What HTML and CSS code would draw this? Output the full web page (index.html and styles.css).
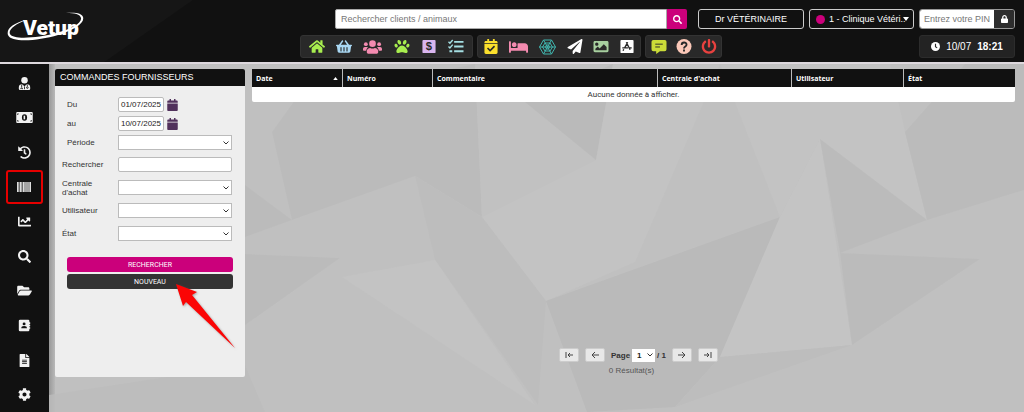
FILE: index.html
```html
<!DOCTYPE html>
<html lang="fr">
<head>
<meta charset="utf-8">
<meta name="viewport" content="width=device-width, initial-scale=1">
<title>Vetup - Commandes fournisseurs</title>
<link rel="stylesheet" href="styles.css">
</head>
<body>
<div class="app">
  <header class="topbar">
    <a class="logo" href="#" aria-label="Vetup">
      <svg viewBox="0 0 80 36" aria-hidden="true">
        <path d="M19 11C6 14-1 20 1 26c3 8 30 6 50 0 16-5 27-12 25-18-1-4-8-5-17-4 9 0 14 1 15 5 1 5-10 11-25 15-18 5-43 7-46 1C1 21 8 15 19 11z"/>
        <text class="logo-text" x="16" y="26">Vetup</text>
      </svg>
    </a>
    <div class="topbar-content">
      <div class="topbar-row">
        <form class="search">
          <input type="search" class="search-input" placeholder="Rechercher clients / animaux" aria-label="Rechercher clients / animaux">
          <button type="button" class="search-button" aria-label="Rechercher"><svg viewBox="0 0 512 512"><path d="M505 442.700L405.300 343c-4.500-4.500-10.600-7-17-7H372c27.600-35.300 44-79.700 44-128C416 93.100 322.900 0 208 0S0 93.100 0 208s93.100 208 208 208c48.300 0 92.700-16.400 128-44v16.300c0 6.400 2.500 12.500 7 17l99.700 99.700c9.400 9.400 24.600 9.400 33.900 0l28.300-28.300c9.400-9.400 9.400-24.600.1-34zM208 336c-70.700 0-128-57.200-128-128 0-70.700 57.200-128 128-128 70.700 0 128 57.200 128 128 0 70.700-57.200 128-128 128z"/></svg></button>
        </form>
        <div class="account">
          <button type="button" class="user-button">Dr VÉTÉRINAIRE</button>
          <label class="clinic">
            <span class="clinic-dot"></span>
            <select class="clinic-select" aria-label="Clinique"><option>1 - Clinique Vétéri..</option></select>
          </label>
          <form class="pin">
            <input type="text" class="pin-input" placeholder="Entrez votre PIN" aria-label="Entrez votre PIN">
            <button type="button" class="pin-button" aria-label="Verrouiller"><svg viewBox="0 0 448 512"><path d="M400 224h-24v-72C376 68.200 307.800 0 224 0S72 68.200 72 152v72H48c-26.500 0-48 21.500-48 48v192c0 26.500 21.500 48 48 48h352c26.500 0 48-21.500 48-48V272c0-26.500-21.500-48-48-48zm-104 0H152v-72c0-39.700 32.300-72 72-72s72 32.300 72 72v72z"/></svg></button>
          </form>
        </div>
      </div>
      <div class="topbar-row">
        <nav class="tools tools-main" aria-label="Raccourcis">
          <a class="lime" href="#" aria-label="Accueil"><svg viewBox="0 0 576 512"><path d="M280.370 148.260L96 300.110V464a16 16 0 0 0 16 16l112.060-.29a16 16 0 0 0 15.920-16V368a16 16 0 0 1 16-16h64a16 16 0 0 1 16 16v95.640a16 16 0 0 0 16 16.050L464 480a16 16 0 0 0 16-16V300L295.670 148.260a12.190 12.190 0 0 0-15.300 0zM571.600 251.470L488 182.560V44.050a12 12 0 0 0-12-12h-56a12 12 0 0 0-12 12v72.610L318.470 43a48 48 0 0 0-61 0L4.340 251.470a12 12 0 0 0-1.600 16.900l25.500 31A12 12 0 0 0 45.150 301l235.220-193.740a12.190 12.190 0 0 1 15.300 0L530.900 301a12 12 0 0 0 16.900-1.600l25.500-31a12 12 0 0 0-1.700-16.930z"/></svg></a>
          <a class="sky" href="#" aria-label="Panier"><svg viewBox="0 0 576 512"><path fill-rule="evenodd" d="M24 192h80L210 46c20-28 66 4 46 34l-80 112h224L320 80c-20-30 26-62 46-34l106 146h80c32 0 32 56 0 56h-8l-28 192c-4 24-22 40-48 40H108c-26 0-44-16-48-40L32 248h-8c-32 0-32-56 0-56zm136 104v120c0 28 40 28 40 0V296c0-28-40-28-40 0zm108 0v120c0 28 40 28 40 0V296c0-28-40-28-40 0zm108 0v120c0 28 40 28 40 0V296c0-28-40-28-40 0z"/></svg></a>
          <a class="pink" href="#" aria-label="Clients"><svg class="wide" viewBox="0 0 640 512"><circle cx="96" cy="160" r="64"/><circle cx="544" cy="160" r="64"/><circle cx="320" cy="144" r="112"/><path d="M64 256h64c18 0 34 7 46 19-40 22-60 60-66 109H32c-18 0-32-14-32-32v-32c0-36 28-64 64-64zM576 256h-64c-18 0-34 7-46 19 40 22 60 60 66 109h76c18 0 32-14 32-32v-32c0-36-28-64-64-64zM243 288c50 24 104 24 154 0 64 0 115 52 115 115v29c0 26-22 48-48 48H176c-26 0-48-22-48-48v-29c0-63 51-115 115-115z"/></svg></a>
          <a class="lime" href="#" aria-label="Animaux"><svg viewBox="0 0 512 512"><path d="M256 224c-79.410 0-192 122.760-192 200.250 0 34.900 26.810 55.750 71.740 55.750 48.840 0 81.090-25.080 120.260-25.080 39.510 0 71.850 25.080 120.260 25.080 44.930 0 71.740-20.850 71.740-55.750C448 346.760 335.410 224 256 224zm-147.280-12.610c-10.400-34.650-42.440-57.090-71.560-50.130-29.120 6.960-44.290 40.690-33.890 75.340 10.400 34.650 42.440 57.090 71.560 50.130 29.120-6.960 44.290-40.690 33.890-75.340zm84.720-20.780c30.940-8.140 42.940-49.500 26.800-92.370-16.140-42.870-54.300-71.040-85.240-62.890-30.940 8.140-42.940 49.500-26.800 92.370 16.130 42.870 54.290 71.030 85.240 62.890zm281.390-29.340c-29.120-6.960-61.150 15.480-71.560 50.130-10.400 34.650 4.770 68.380 33.890 75.340 29.120 6.960 61.150-15.480 71.560-50.130 10.400-34.650-4.770-68.380-33.890-75.340zm-156.270 29.340c30.940 8.140 69.110-20.010 85.240-62.890 16.140-42.870 4.140-84.220-26.800-92.370-30.940-8.140-69.110 20.010-85.240 62.890-16.140 42.870-4.140 84.220 26.800 92.370z"/></svg></a>
          <a class="lilac" href="#" aria-label="Caisse"><svg viewBox="0 0 16 16"><rect x="1" y="1" width="14" height="14" rx="1"/><text class="dollar" x="8" y="12">$</text></svg></a>
          <a class="aqua" href="#" aria-label="Tâches"><svg viewBox="0 0 16 16"><path d="M6 2h10v2H6zM6 7h10v2H6zM6 12h10v2H6zM1 12h3v2H1z"/><path class="line" d="M0 3l1.500 1.500L4.500 1M0 8l1.500 1.500L4.500 6"/></svg></a>
        </nav>
        <nav class="tools tools-care" aria-label="Clinique">
          <a class="yellow" href="#" aria-label="Agenda"><svg viewBox="0 0 448 512"><path fill-rule="evenodd" d="M0 160h448v304c0 26-22 48-48 48H48c-26 0-48-22-48-48zm0-24v-24c0-26 22-48 48-48h48V12q0-12 12-12h40q12 0 12 12v52h128V12q0-12 12-12h40q12 0 12 12v52h48c26 0 48 22 48 48v24zM94 334l90 90q10 8 20 0l152-150q8-10 0-20l-20-20q-10-8-20 0L194 356l-60-60q-10-8-20 0l-20 20q-8 10 0 18z"/></svg></a>
          <a class="pink" href="#" aria-label="Hospitalisation"><svg class="wide" viewBox="0 0 640 512"><path d="M176 256c44.110 0 80-35.890 80-80s-35.890-80-80-80-80 35.890-80 80 35.890 80 80 80zm352-128H304c-8.840 0-16 7.160-16 16v144H64V80c0-8.840-7.160-16-16-16H16C7.160 64 0 71.160 0 80v352c0 8.840 7.160 16 16 16h32c8.840 0 16-7.160 16-16v-48h512v48c0 8.840 7.160 16 16 16h32c8.840 0 16-7.160 16-16V240c0-61.860-50.140-112-112-112z"/></svg></a>
          <a class="teal" href="#" aria-label="Réseau"><svg class="wide" viewBox="0 0 18 16"><path class="web" d="M5 1h8l4 7-4 7H5L1 8zM6.500 4h5l2.500 4-2.500 4h-5L4 8zM8 6h2l1 2-1 2H8L7 8zM5 1l8 14M13 1L5 15M1 8h16"/></svg></a>
          <a class="white" href="#" aria-label="Messages"><svg viewBox="0 0 512 512"><path d="M476 3.200L12.500 270.600c-18.100 10.400-15.800 35.600 2.200 43.200L121 358.400l287.300-253.200c5.500-4.900 13.300 2.600 8.600 8.300L176 407v80.500c0 23.600 28.500 32.900 42.500 15.800L282 426l124.600 52.200c14.200 6 30.400-2.900 33-18.200l72-432C515 7.800 493.300-6.800 476 3.200z"/></svg></a>
          <a class="sage" href="#" aria-label="Images"><svg viewBox="0 0 512 512"><path d="M464 448H48c-26.510 0-48-21.490-48-48V112c0-26.510 21.490-48 48-48h416c26.510 0 48 21.490 48 48v288c0 26.510-21.490 48-48 48zM112 120c-30.928 0-56 25.072-56 56s25.072 56 56 56 56-25.072 56-56-25.072-56-56-56zM64 384h384V272l-87.515-87.515c-4.686-4.686-12.284-4.686-16.971 0L208 320l-55.515-55.515c-4.686-4.686-12.284-4.686-16.971 0L64 336v48z"/></svg></a>
          <a class="white" href="#" aria-label="Applications"><svg viewBox="0 0 16 16"><rect x="1" y="1" width="14" height="14" rx="1"/><path class="cut bold" d="M8.700 3.500L5.500 9.500M7.300 3.500l4 8M3 9.500h6M10.500 9.500H13M4.500 11l-.7 1.500"/></svg></a>
        </nav>
        <nav class="tools tools-help" aria-label="Aide">
          <a class="acid" href="#" aria-label="Discussion"><svg viewBox="0 0 16 16"><path d="M2 1h12q2 0 2 2v8q0 2-2 2H9l-4 3v-3H2q-2 0-2-2V3q0-2 2-2z"/><path class="cut" d="M4 5.500h8M4 8.500h5"/></svg></a>
          <a class="peach" href="#" aria-label="Aide"><svg viewBox="0 0 16 16"><circle cx="8" cy="8" r="8"/><path class="cut thick" d="M5.500 6.300C5.500 3 10.700 3 10.700 6c0 2-2.700 1.800-2.700 4M8 11.300v1.900"/></svg></a>
          <a class="red" href="#" aria-label="Déconnexion"><svg viewBox="0 0 512 512"><path d="M400 54.100c63 45 104 118.600 104 201.900 0 136.800-110.800 247.700-247.500 248C120 504.300 8.200 393 8 256.400 7.900 173.100 48.900 99.300 111.800 54.200c11.700-8.300 28-4.800 35 7.700L162.600 90c5.900 10.500 3.100 23.800-6.600 31-41.500 30.800-68 79.600-68 134.900-.1 92.300 74.500 168.100 168 168.100 91.600 0 168.600-74.200 168-169.100-.3-51.800-24.700-101.800-68.100-134-9.700-7.200-12.400-20.500-6.500-30.900l15.800-28.100c7-12.400 23.200-16.100 34.800-7.800zM296 264V24c0-13.300-10.700-24-24-24h-32c-13.300 0-24 10.700-24 24v240c0 13.300 10.700 24 24 24h32c13.300 0 24-10.700 24-24z"/></svg></a>
        </nav>
        <div class="clock">
          <svg viewBox="0 0 16 16" aria-hidden="true"><circle cx="8" cy="8" r="8"/><path class="cut thick" d="M8 3v5.500l3 2"/></svg>
          <span>10/07</span><strong>18:21</strong>
        </div>
      </div>
    </div>
  </header>

  <div class="workspace">
    <nav class="sidebar" aria-label="Menu principal">
      <a href="#" aria-label="Praticiens"><svg viewBox="0 0 14 16"><circle cx="7" cy="4" r="4"/><path d="M4 9l3 2.500L10 9q4 0 4 4v1.500q0 1.500-1.500 1.500h-11Q0 16 0 14.500V13q0-4 4-4z"/><path class="cut fine" d="M3.500 9.500V13M2.500 15v-1.200h2V15M10.500 9.500v2M9.500 13a1 1 0 1 0 2 0 1 1 0 1 0-2 0M7 11.500V15"/></svg></a>
      <a href="#" aria-label="Paiements"><svg class="wide" viewBox="0 0 18 12"><rect y="0" width="18" height="12" rx="1"/><ellipse class="hole" cx="9" cy="6" rx="2.800" ry="3.500"/><path d="M8 4h1.700v4H8z"/><path class="cut fine" d="M1.500 3v-1h1M15.500 2h1v1M1.500 9v1h1M15.500 10h1V9"/></svg></a>
      <a href="#" aria-label="Historique"><svg viewBox="0 0 512 512"><path d="M504 255.531c.253 136.640-111.180 248.372-247.820 248.468-59.015.042-113.223-20.530-155.822-54.911-11.077-8.940-11.905-25.541-1.839-35.607l11.267-11.267c8.609-8.609 22.353-9.551 31.891-1.984C173.062 425.135 212.781 440 256 440c101.705 0 184-82.311 184-184 0-101.705-82.311-184-184-184-48.814 0-93.149 18.969-126.068 49.932l50.754 50.754c10.080 10.080 2.941 27.314-11.313 27.314H24c-8.837 0-16-7.163-16-16V38.627c0-14.254 17.234-21.393 27.314-11.314l49.372 49.372C129.209 34.136 189.552 8 256 8c136.810 0 247.747 110.780 248 247.531zm-180.912 78.784l9.823-12.630c8.138-10.463 6.253-25.542-4.210-33.679L288 256.349V152c0-13.255-10.745-24-24-24h-16c-13.255 0-24 10.745-24 24v135.651l65.409 50.874c10.463 8.137 25.541 6.253 33.679-4.210z"/></svg></a>
      <a class="current" href="#" aria-label="Commandes fournisseurs" aria-current="page"><svg viewBox="0 0 14 12"><path d="M0 1h1v10H0zM1.500 1h.5v10h-.5zM3 1h1v10H3zM4.500 1h.5v10h-.5zM6 1h1v10H6zM7.500 1h1v10h-1zM9.500 1h.5v10h-.5zM10.500 1h1v10h-1zM12 1h.5v10H12zM13 1h1v10h-1z"/><path class="shade" d="M0 1h14v10H0z"/></svg></a>
      <a href="#" aria-label="Statistiques"><svg viewBox="0 0 512 512"><path d="M496 384H64V80c0-8.840-7.160-16-16-16H16C7.160 64 0 71.160 0 80v336c0 17.670 14.330 32 32 32h464c8.840 0 16-7.160 16-16v-32c0-8.840-7.160-16-16-16zM464 96H345.940c-21.380 0-32.090 25.850-16.970 40.970l32.400 32.400L288 242.750l-73.370-73.370c-12.500-12.500-32.760-12.500-45.250 0l-68.690 68.690c-6.250 6.250-6.250 16.380 0 22.630l22.620 22.620c6.250 6.250 16.380 6.250 22.630 0L192 237.250l73.370 73.370c12.500 12.500 32.760 12.500 45.250 0l96-96 32.400 32.400c15.120 15.120 40.970 4.410 40.970-16.970V112c.01-8.840-7.150-16-15.990-16z"/></svg></a>
      <a href="#" aria-label="Recherche"><svg viewBox="0 0 512 512"><path d="M505 442.700L405.300 343c-4.500-4.500-10.600-7-17-7H372c27.600-35.300 44-79.700 44-128C416 93.100 322.900 0 208 0S0 93.100 0 208s93.100 208 208 208c48.300 0 92.700-16.400 128-44v16.300c0 6.400 2.500 12.500 7 17l99.700 99.700c9.400 9.400 24.600 9.400 33.900 0l28.300-28.300c9.400-9.400 9.400-24.600.1-34zM208 336c-70.700 0-128-57.200-128-128 0-70.700 57.200-128 128-128 70.700 0 128 57.200 128 128 0 70.700-57.200 128-128 128z"/></svg></a>
      <a href="#" aria-label="Dossiers"><svg class="folder" viewBox="0 0 576 512"><path d="M572.694 292.093L500.270 416.248A63.997 63.997 0 0 1 444.989 448H45.025c-18.523 0-30.064-20.093-20.731-36.093l72.424-124.155A64 64 0 0 1 152 256h399.964c18.523 0 30.064 20.093 20.730 36.093zM152 224h328v-48c0-26.510-21.490-48-48-48H272l-64-64H48C21.490 64 0 85.490 0 112v278.046l69.077-118.418C86.214 242.250 117.989 224 152 224z"/></svg></a>
      <a href="#" aria-label="Contacts"><svg viewBox="0 0 14 16"><path d="M1.500 1h10Q13 1 13 2.500V4h1v2h-1v1h1v2h-1v1h1v2h-1v1.500q0 1.500-1.500 1.500h-10Q0 15 0 13.500v-11Q0 1 1.500 1z"/><circle class="hole" cx="6.500" cy="6" r="1.800"/><path class="hole" d="M3 11.500Q3 8.500 6.500 8.500T10 11.500z"/></svg></a>
      <a href="#" aria-label="Documents"><svg viewBox="0 0 384 512"><path d="M224 136V0H24C10.700 0 0 10.700 0 24v464c0 13.300 10.700 24 24 24h336c13.300 0 24-10.700 24-24V160H248c-13.200 0-24-10.800-24-24zm64 236c0 6.600-5.400 12-12 12H108c-6.600 0-12-5.400-12-12v-8c0-6.600 5.400-12 12-12h168c6.600 0 12 5.400 12 12v8zm0-64c0 6.600-5.400 12-12 12H108c-6.600 0-12-5.400-12-12v-8c0-6.600 5.400-12 12-12h168c6.600 0 12 5.400 12 12v8zm0-72v8c0 6.600-5.400 12-12 12H108c-6.600 0-12-5.400-12-12v-8c0-6.600 5.400-12 12-12h168c6.600 0 12 5.400 12 12zm96-114.100v6.100H256V0h6.100c6.400 0 12.500 2.500 17 7l97.900 98c4.500 4.500 7 10.600 7 16.900z"/></svg></a>
      <a href="#" aria-label="Paramètres"><svg viewBox="0 0 512 512"><path d="M487.400 315.700l-42.600-24.600c4.300-23.200 4.300-47 0-70.200l42.600-24.600c4.900-2.800 7.100-8.600 5.500-14-11.100-35.600-30-67.800-54.700-94.600-3.800-4.100-10-5.100-14.800-2.300L380.800 110c-17.900-15.400-38.500-27.300-60.800-35.100V25.800c0-5.600-3.900-10.500-9.400-11.700-36.700-8.200-74.300-7.800-109.200 0-5.500 1.200-9.400 6.100-9.400 11.700V75c-22.200 7.900-42.800 19.800-60.800 35.100L88.700 85.500c-4.900-2.800-11-1.900-14.800 2.300-24.700 26.700-43.600 58.900-54.700 94.600-1.700 5.400.6 11.200 5.500 14L67.300 221c-4.300 23.200-4.300 47 0 70.200l-42.600 24.600c-4.900 2.800-7.100 8.600-5.500 14 11.100 35.600 30 67.800 54.700 94.600 3.800 4.100 10 5.100 14.800 2.300l42.600-24.600c17.900 15.400 38.500 27.300 60.800 35.100v49.200c0 5.600 3.900 10.500 9.400 11.700 36.700 8.200 74.300 7.800 109.200 0 5.500-1.200 9.400-6.100 9.400-11.700v-49.200c22.200-7.900 42.800-19.800 60.800-35.100l42.600 24.600c4.900 2.800 11 1.900 14.800-2.300 24.700-26.700 43.600-58.900 54.700-94.600 1.500-5.500-.7-11.300-5.600-14.100zM256 336c-44.100 0-80-35.900-80-80s35.900-80 80-80 80 35.900 80 80-35.900 80-80 80z"/></svg></a>
    </nav>

    <main class="content">
      <svg class="backdrop" viewBox="49 64 975 348" preserveAspectRatio="xMidYMid slice" aria-hidden="true">
        <path fill="#bbb" d="M272 132l23-32 180-36 7 153-67-41-123 44zM245 185l47 35-47 17zM245 254l95 4-95 67z"/>
        <path fill="#c2c2c2" d="M475 64l50 38 71 58-114 57z"/>
        <path fill="#b9b9b9" d="M525 102l88-38-17 96z"/>
        <path fill="#c4c4c4" d="M613 64h107l-85 198-89 39-64-84 114-57z"/>
        <path fill="#bdbdbd" d="M482 217l64 84-8 104-103-145zM415 176l67 41-47 43z"/>
        <path fill="#b9b9b9" d="M546 301l234-84-60 140-45 50-88 5z"/>
        <path fill="#c6c6c6" d="M780 217l40-78 32 206-132 12z"/>
        <path fill="#c4c4c4" d="M720 64h170l15 68 22 88-107-81-40 78zM435 260l-93 17 193 128z"/>
        <path fill="#bbb" d="M820 139l107 81-87 33zM905 132l60-68h59v126l-97 30zM840 253l140 6-128 86z"/>
        <path fill="#bdbdbd" d="M720 357l132-12-177 62zM49 395l196-30 20 47H49z"/>
      </svg>

      <section class="panel">
        <h1 class="panel-title">COMMANDES FOURNISSEURS</h1>
        <form class="filters">
          <div class="filter-group period">
            <div class="field">
              <label for="from">Du</label>
              <input id="from" class="date" type="text" value="01/07/2025">
              <button type="button" class="calendar" aria-label="Choisir la date de début"><svg viewBox="0 0 448 512"><path d="M12 192h424c6.600 0 12 5.400 12 12v260c0 26.500-21.500 48-48 48H48c-26.500 0-48-21.500-48-48V204c0-6.600 5.400-12 12-12zm436-44v-36c0-26.500-21.500-48-48-48h-48V12c0-6.600-5.400-12-12-12h-40c-6.600 0-12 5.400-12 12v52H160V12c0-6.600-5.400-12-12-12h-40c-6.600 0-12 5.400-12 12v52H48C21.500 64 0 85.500 0 112v36c0 6.600 5.400 12 12 12h424c6.600 0 12-5.400 12-12z"/></svg></button>
            </div>
            <div class="field">
              <label for="to">au</label>
              <input id="to" class="date" type="text" value="10/07/2025">
              <button type="button" class="calendar" aria-label="Choisir la date de fin"><svg viewBox="0 0 448 512"><path d="M12 192h424c6.600 0 12 5.400 12 12v260c0 26.500-21.500 48-48 48H48c-26.500 0-48-21.500-48-48V204c0-6.600 5.400-12 12-12zm436-44v-36c0-26.500-21.500-48-48-48h-48V12c0-6.600-5.400-12-12-12h-40c-6.600 0-12 5.400-12 12v52H160V12c0-6.600-5.400-12-12-12h-40c-6.600 0-12 5.400-12 12v52H48C21.500 64 0 85.500 0 112v36c0 6.600 5.400 12 12 12h424c6.600 0 12-5.400 12-12z"/></svg></button>
            </div>
            <div class="field">
              <label for="range">Période</label>
              <select id="range"><option></option></select>
            </div>
          </div>
          <div class="filter-group">
            <div class="field"><label for="query">Rechercher</label><input id="query" type="text"></div>
            <div class="field"><label for="center">Centrale d'achat</label><select id="center"><option></option></select></div>
            <div class="field"><label for="user">Utilisateur</label><select id="user"><option></option></select></div>
            <div class="field"><label for="state">État</label><select id="state"><option></option></select></div>
          </div>
          <div class="actions">
            <button type="button" class="action primary">RECHERCHER</button>
            <button type="button" class="action">NOUVEAU</button>
          </div>
        </form>
        <svg class="pointer" viewBox="0 0 64 68" aria-hidden="true"><path d="M2 2l21 8-5 3 43 53-49-46-3 4z"/></svg>
      </section>

      <section class="results">
        <table class="orders">
          <colgroup><col class="c-short"><col class="c-short"><col><col class="c-center"><col class="c-user"><col class="c-user"></colgroup>
          <thead>
            <tr>
              <th scope="col"><span class="sorted">Date<svg viewBox="0 0 6 4"><path d="M3 0l3 4H0z"/></svg></span></th>
              <th scope="col">Numéro</th><th scope="col">Commentaire</th><th scope="col">Centrale d'achat</th><th scope="col">Utilisateur</th><th scope="col">État</th>
            </tr>
          </thead>
          <tbody><tr><td colspan="6">Aucune donnée à afficher.</td></tr></tbody>
        </table>
        <footer class="pagination">
          <div class="pager">
            <button type="button" aria-label="Première page"><svg viewBox="0 0 8 8"><path d="M1 1v6M8 4H3M5 2L3 4l2 2"/></svg></button>
            <button type="button" aria-label="Page précédente"><svg viewBox="0 0 8 8"><path d="M8 4H1M4 1L1 4l3 3"/></svg></button>
            <label class="page-choice">Page <select><option>1</option></select> / 1</label>
            <button type="button" aria-label="Page suivante"><svg viewBox="0 0 8 8"><path d="M0 4h7M4 1l3 3-3 3"/></svg></button>
            <button type="button" aria-label="Dernière page"><svg viewBox="0 0 8 8"><path d="M7 1v6M0 4h5M3 2l2 2-2 2"/></svg></button>
          </div>
          <p class="count">0 Résultat(s)</p>
        </footer>
      </section>
    </main>
  </div>
</div>
</body>
</html>
```

FILE: styles.css
```css
* { box-sizing: border-box; }

body {
  margin: 0;
  font: 8px/9px "Liberation Sans", Arial, sans-serif;
  color: #333;
}

button, input, select { font: inherit; margin: 0; padding: 0; }
button { cursor: pointer; }
svg { display: block; fill: currentColor; }

.app { display: flex; flex-direction: column; min-height: 100vh; background: #c0c0c0; }

/* Top bar */
.topbar {
  display: flex;
  justify-content: space-between;
  gap: 16px;
  height: 64px;
  padding: 9px 9px 0 7px;
  border-bottom: 2px solid #ddd8dd;
  background:
    linear-gradient(145deg, #161616 0 110px, transparent 111px),
    #111;
  color: #fff;
}
.logo { flex: none; width: 80px; color: #fff; }
.logo svg { width: 80px; height: 36px; }
.logo-text { font: 900 21px Roboto, sans-serif; }

.topbar-content { display: flex; flex-direction: column; gap: 6px; flex: 0 1 715px; min-width: 0; }
.topbar-row { display: flex; gap: 4px; }
.search { display: flex; flex: 1; height: 20px; margin: 0 7px 0 35px; }
.search-input {
  flex: 1; min-width: 0; padding: 0 5px;
  border: 1px solid #aaa; border-radius: 2px 0 0 2px;
  background: #fff; font-size: 9px;
}
.search-input::placeholder, .pin-input::placeholder { color: #777; opacity: 1; }
.search-button {
  display: grid; place-items: center; width: 20px;
  border: 0; border-radius: 0 2px 2px 0; background: #cb007b; color: #fff;
}
.search-button svg { width: 9px; height: 9px; }

.account { display: flex; gap: 5px; height: 20px; font-size: 9px; }
.user-button, .clinic { border: 1px solid #ccc; border-radius: 3px; background: #111; color: #fff; }
.user-button { width: 106px; }
.clinic { display: flex; align-items: center; gap: 4px; width: 105px; padding: 0 4px 0 6px; }
.clinic-dot { flex: none; width: 9px; height: 9px; border-radius: 50%; background: #cb007b; }
.clinic-select {
  appearance: none; flex: 1; min-width: 0; height: 18px; border: 0; color: #fff;
  background: #111 url("data:image/svg+xml,%3Csvg xmlns='http://www.w3.org/2000/svg' viewBox='0 0 6 4'%3E%3Cpath d='M0 0h6L3 4z' fill='white'/%3E%3C/svg%3E") no-repeat right center / 6px 4px;
}
.pin { display: flex; width: 96px; margin: 0; border: 1px solid #999; border-radius: 3px; overflow: hidden; }
.pin-input { flex: 1; min-width: 0; padding: 0 0 0 4px; border: 0; background: #fff; }
.pin-button { display: grid; place-items: center; width: 20px; border: 0; background: #2d2d2d; color: #fff; }
.pin-button svg { width: 7px; height: 8px; }

.tools {
  display: flex; align-items: center; justify-content: space-around;
  height: 23px; padding: 0 2px; border: 1px solid #333; border-radius: 3px; background: #292929;
}
.tools-main { width: 173px; }
.tools-care { width: 164px; padding: 0; }
.tools-help { width: 77px; padding: 0; }
.tools svg { width: 16px; height: 15px; }
.tools .wide { width: 19px; height: 16px; }
.cut { fill: none; stroke: #292929; stroke-width: 1; }
.bold { stroke-width: 1.5; }
.thick { stroke-width: 2; }
.fine { stroke: #111; }
.hole { fill: #111; }
.shade { opacity: .45; }
.line, .web { fill: none; stroke: currentColor; }
.line { stroke-width: 1.5; }
.dollar { fill: #292929; font: bold 12px "Liberation Sans", sans-serif; text-anchor: middle; }
.lime { color: #a8ee4f; }
.sky { color: #a9d8f3; }
.pink { color: #f48bb0; }
.lilac { color: #d9b5ef; }
.aqua { color: #a5dfe3; }
.yellow { color: #fbe02d; }
.teal { color: #40b5ae; }
.white { color: #fff; }
.sage { color: #a7cf9f; }
.acid { color: #cbdc38; }
.peach { color: #fbc8b8; }
.red { color: #e8413f; }

.clock {
  display: flex; align-items: center; justify-content: center; gap: 6px;
  width: 96px; height: 23px; margin-left: auto;
  border: 1px solid #2c2c2c; border-radius: 3px; background: #232323; font-size: 10px;
}
.clock svg { width: 9px; height: 9px; }

/* Side menu */
.workspace { display: flex; flex: 1; }
.sidebar {
  display: flex; flex-direction: column; align-items: center;
  flex: none; width: 49px; padding-top: 2px; background: #111;
}
.sidebar a { display: grid; place-items: center; flex: 1; width: 37px; margin-right: 1px; color: #f2f2f2; }
.sidebar svg { width: 13px; height: 13px; }
.sidebar .wide { width: 17px; height: 11px; }
.sidebar .folder { width: 15px; height: 13px; }
.sidebar .current { box-shadow: inset 0 0 0 2px #e60000; border-radius: 3px; color: #ddd; }
.sidebar .current svg { width: 14px; height: 12px; }

/* Work area */
.content { position: relative; display: flex; gap: 7px; flex: 1; min-width: 0; padding: 5px 9px 35px 6px; }
.content::before {
  content: ""; position: absolute; left: 0; top: 0; bottom: 0; width: 6px;
  background: linear-gradient(90deg, #999, #b8b8b8);
}
.backdrop { position: absolute; left: 0; top: 0; width: 100%; height: 100%; opacity: .8; }

.panel { position: relative; flex: none; width: 190px; border-radius: 2px; background: #eee; }
.panel-title {
  margin: 0; padding: 0 5px; border-radius: 2px 2px 0 0; background: #111; color: #fff;
  font-size: 9px; font-weight: normal; line-height: 17px;
}
.filters { padding: 11px 12px 0 7px; }
.filter-group { display: grid; gap: 8px; margin-bottom: 6px; }
.period { gap: 4px; margin-bottom: 7px; }
.field { display: flex; align-items: center; height: 15px; padding-right: 1px; }
.field label { flex: none; width: 56px; padding-right: 12px; }
.period label { padding-left: 5px; padding-right: 0; }
.field input, .field select {
  flex: 1; min-width: 0; height: 15px; border: 1px solid #bbb; border-radius: 2px;
  background: #fff; color: #222;
}
.field .date { flex: none; width: 46px; text-align: center; }
.field select, .page-choice select {
  appearance: none; border-radius: 0;
  background: #fff url("data:image/svg+xml,%3Csvg xmlns='http://www.w3.org/2000/svg' viewBox='0 0 6 4'%3E%3Cpath d='M.5.5L3 3l2.500-2.500' fill='none' stroke='%23333'/%3E%3C/svg%3E") no-repeat right 2px center / 6px 4px;
}
.calendar { margin-left: 3px; border: 0; background: none; color: #51315c; }
.calendar svg { width: 11px; height: 12px; }
.actions { display: grid; gap: 2px; margin-top: 16px; padding-left: 5px; }
.action { height: 15px; border: 0; border-radius: 3px; background: #333; color: #fff; font: 7px Roboto, sans-serif; }
.primary { background: #cb007b; }

.pointer {
  position: absolute; left: 119px; top: 213px; width: 64px; height: 68px;
  fill: #fb0505; filter: drop-shadow(1px 1px 1px #6668);
}

/* Results */
.results { position: relative; display: flex; flex-direction: column; justify-content: space-between; flex: 1; min-width: 0; }
.orders { width: 100%; table-layout: fixed; border-collapse: separate; border-spacing: 0; }
.c-short { width: 90px; }
.c-center { width: 134px; }
.c-user { width: 112px; }
.orders th {
  height: 18px; padding: 0 4px; background: #111; color: #fff; text-align: left;
  font: bold 7px "Open Sans", sans-serif;
}
.orders th + th { border-left: 1px solid #bbb; }
.sorted { display: flex; align-items: center; justify-content: space-between; }
.sorted svg { width: 5px; height: 3px; }
.orders td {
  height: 15px; padding: 0; border-radius: 0 0 2px 2px; background: #fff;
  text-align: center; font: 8px Roboto, sans-serif;
}

.pagination { display: flex; flex-direction: column; gap: 4px; width: 170px; margin: 0 auto; padding-left: 10px; }
.pager { display: flex; align-items: center; justify-content: space-between; }
.pager button {
  display: grid; place-items: center; width: 20px; height: 14px;
  border: 1px solid #ccc; border-radius: 2px; background: #e8e8e8; color: #444;
}
.pager button svg { width: 8px; height: 8px; fill: none; stroke: currentColor; }
.page-choice { display: flex; align-items: center; gap: 2px; font-weight: bold; }
.page-choice select { width: 23px; height: 13px; padding-left: 5px; border: 0; color: #222; }
.count { margin: 0; color: #555; text-align: center; padding: 0 14px 2px 0; }
```
